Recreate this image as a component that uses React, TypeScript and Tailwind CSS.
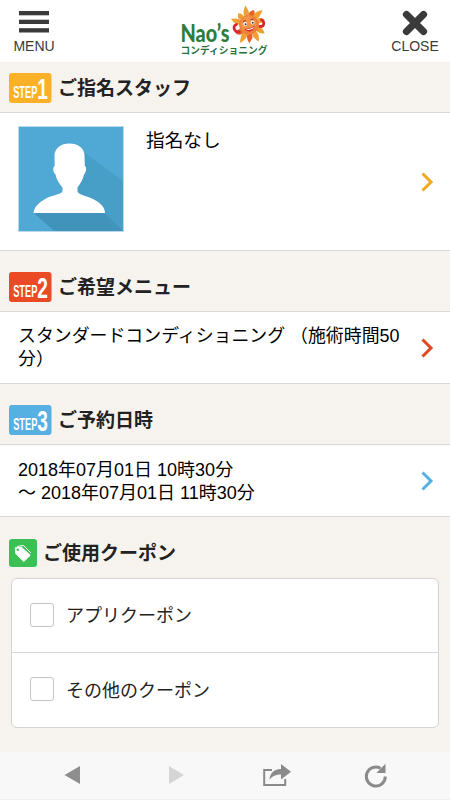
import { ReactNode } from 'react';

const font = "font-['Liberation_Sans','Noto_Sans_CJK_JP',sans-serif]";
const jpFont = "font-['Noto_Sans_CJK_JP',sans-serif]";

// [angle, length, color] for every flame round the sun
const flames: [number, number, string][] = [
  [-13, 19.5, '#efa233'],
  [15, 15.5, '#e4602c'],
  [40, 20, '#efa233'],
  [69, 16.5, '#efa233'],
  [117, 18, '#eda02c'],
  [148, 19.5, '#efa233'],
  [177, 18.5, '#e4602c'],
  [204, 20.5, '#efa233'],
  [232, 16, '#e4602c'],
  [286, 19, '#efa233'],
  [314, 15.5, '#eda02c'],
];

function Logo() {
  return (
    <svg width="90" height="54" viewBox="180 3 90 54" className="overflow-visible">
      {flames.map(([angle, length, color]) => (
        <path
          key={angle}
          d={`M-2 -9 Q-4.8 -12.500 .8 ${-length} Q3.800 -12.500 2 -9Z`}
          fill={color}
          transform={`translate(250 24.700) rotate(${angle})`}
        />
      ))}
      <g fill="none" stroke="#d9252b" strokeWidth="2.800" strokeLinecap="round">
        <path d="M237.500 24.500C234 26 234.500 29.500 237 31.500L240 31.800" />
        <path d="M262.500 20C265.500 21 265.500 25.500 262.500 26.500L260.500 26.300" />
      </g>
      <circle cx="250" cy="24.700" r="10" fill="#ee8039" />
      <circle cx="249.500" cy="24" r="7.800" fill="#f3934a" />
      <circle cx="246.300" cy="24" r="1.900" fill="#fff" />
      <circle cx="253.500" cy="22.500" r="1.900" fill="#fff" />
      <circle cx="246.600" cy="24.200" r="1" fill="#432" />
      <circle cx="253.700" cy="22.700" r="1" fill="#432" />
      <path d="M243.800 21.500l3.200-1M251.500 19.500l3.500-.5" stroke="#a3351c" strokeWidth="1" />
      <path d="M245.500 28.700c4 .5 7-.5 10-3.200 0 4-2.500 6.200-5.500 6-2 0-3.700-1-4.500-2.800z" fill="#cf2b23" />
      <path d="M247 29c3 .3 5.500-.5 7.800-2l-.5 1.500c-2 1.200-4.300 1.600-6.500 1.300z" fill="#fff" />
      <text transform="translate(181.500 42)" fontSize="25" fontWeight="900" fontFamily="Lato, sans-serif" fill="#2f7d3b" textLength="49" lengthAdjust="spacingAndGlyphs">
        Nao’s
      </text>
      <text x="181.500" y="53.700" fontSize="9.800" fontWeight="700" fontFamily="'Noto Sans CJK JP', sans-serif" fill="#26703a" textLength="87" lengthAdjust="spacingAndGlyphs">
        コンディショニング
      </text>
    </svg>
  );
}

function Header() {
  return (
    <header className="flex h-[62px] justify-between bg-white text-[#3a3a3a]">
      <button className="flex w-[68px] flex-col items-center pt-[11px]">
        <svg width="30" height="22" viewBox="0 0 30 22" fill="#3a3a3a">
          <rect y="0" width="30" height="4.300" />
          <rect y="8.700" width="30" height="4.300" />
          <rect y="17.200" width="30" height="4.300" />
        </svg>
        <span className="mt-[5px] text-[14px] leading-4">MENU</span>
      </button>
      <div className="pt-[3px]">
        <Logo />
      </div>
      <button className="flex w-[70px] flex-col items-center pt-[10px]">
        <svg width="26" height="26" viewBox="0 0 26 26">
          <path d="M4.500 4.500L21.500 21.500M21.500 4.500L4.500 21.500" stroke="#3a3a3a" strokeWidth="7.200" strokeLinecap="round" />
        </svg>
        <span className="mt-[2px] text-[14px] leading-4">CLOSE</span>
      </button>
    </header>
  );
}

function StepBadge({ step, color }: { step: string; color: string }) {
  return (
    <svg width="43" height="30" viewBox="0 0 43 30" className="overflow-visible">
      <rect width="42.500" height="30" rx="3" fill={color} />
      <g fill="#fff" fontFamily="'Liberation Sans', sans-serif" fontWeight="700">
        <text transform="translate(4.200 24.700) scale(.56 1)" fontSize="16.500">STEP</text>
        <text transform="translate(28.300 25.500) scale(.66 1)" fontSize="29">{step}</text>
      </g>
    </svg>
  );
}

function SectionTitle({ icon, children }: { icon: ReactNode; children: ReactNode }) {
  return (
    <h2 className={`flex items-center gap-[6px] pl-[9px] text-[19px] leading-[30px] font-bold text-[#222] ${jpFont}`}>
      {icon}
      <span className="relative -top-px">{children}</span>
    </h2>
  );
}

function Chevron({ color }: { color: string }) {
  return (
    <svg className="shrink-0" width="14" height="20" viewBox="0 0 14 20" fill="none">
      <path d="M2.500 1.500L11 10L2.500 18.500" stroke={color} strokeWidth="3" />
    </svg>
  );
}

function Avatar() {
  return (
    <svg className="shrink-0" width="106" height="106" viewBox="0 0 106 106">
      <rect width="106" height="106" fill="#b9d9e8" />
      <rect x="1" y="1" width="104" height="104" fill="#50a9d4" />
      <path d="M67 27L105 55V105H87L50 70z" fill="#479fc8" />
      <path d="M16 87H86L105 105H36z" fill="#4293bc" />
      <path
        d="M51.500 17.500C60 17.500 66 22 66.500 29L66.800 40C68.800 40.500 68.500 46 66 48.500C65 54 61.500 58.500 59.500 61.500V65.500C61 69 68 69.500 74 72.500C82 76.500 87 81 87 87H15.500C16 81 21 76.500 28 72.500C34 69 42 69 44.500 65.500V61.500C41.500 58 38.500 54 37.500 48.500C35 46.500 34.500 41 36.700 40L36.500 29C37 22 43 17.500 51.500 17.500Z"
        fill="#fff"
      />
    </svg>
  );
}

function CouponIcon() {
  return (
    <svg width="28" height="28" viewBox="0 0 28 28">
      <rect width="28" height="28" rx="3" fill="#3cc054" />
      <path d="M8 7.500L14.500 6.500L22 14" fill="none" stroke="#fff" strokeWidth="1" />
      <path d="M6.300 8.800L12.500 8.300L21.200 16.300L14.700 22.500L6.700 14.500Z" fill="#fff" stroke="#fff" strokeWidth="1" strokeLinejoin="round" />
      <circle cx="8.800" cy="10.800" r="1.200" fill="#3cc054" />
    </svg>
  );
}

function Coupon({ label }: { label: string }) {
  return (
    <label className={`flex h-[74px] items-center gap-[12px] pb-[2px] pl-[18px] text-[18px] text-[#222] ${jpFont}`}>
      <input type="checkbox" className="size-6 appearance-none rounded-[3px] border border-[#c4c4c4] bg-white" />
      <span>{label}</span>
    </label>
  );
}

function Toolbar() {
  return (
    <nav className="h-12 border-b border-[#f0f0f0] bg-[#f8f8f8]">
      <svg width="450" height="46" viewBox="0 752 450 46">
        <path d="M64.500 775L80 766V784Z" fill="#8e8e8e" />
        <path d="M184 775L169 766V784Z" fill="#d5d5d5" />
        <path d="M272 770H264.200V785H285.200V779" fill="none" stroke="#8a8a8a" strokeWidth="2" />
        <path d="M269.500 780C270 772.500 274.500 769 281 769V764L291 771.800L281 779.500V774.500C276 774.500 272 776 269.500 780Z" fill="#8a8a8a" />
        <path d="M380.500 768.300A9.500 9.500 0 1 0 385.300 776.500" fill="none" stroke="#8a8a8a" strokeWidth="3" />
        <path d="M385.500 763.800V773H376.300Z" fill="#8a8a8a" />
      </svg>
    </nav>
  );
}

export default function App() {
  return (
    <div className={`flex h-[800px] w-[450px] flex-col overflow-hidden bg-[#f6f3ee] text-black ${font}`}>
      <Header />
      <main className="flex-1 bg-[repeating-linear-gradient(0deg,#f7f4ef_0px,#f7f4ef_2px,#f5f2ec_3px,#f7f4ef_4px)]">
        <section>
          <div className="pt-[11px] pb-[9px]">
            <SectionTitle icon={<StepBadge step="1" color="#fbb127" />}>ご指名スタッフ</SectionTitle>
          </div>
          <div className="flex h-[139px] items-center justify-between border-y border-[#d9d8d5] bg-white pr-[16px] pl-[18px]">
            <div className="flex gap-[22px] pb-[6px]">
              <Avatar />
              <p className={`text-[18.700px] leading-[26px] ${jpFont}`}>指名なし</p>
            </div>
            <Chevron color="#f0aa20" />
          </div>
        </section>
        <section>
          <div className="pt-[21px] pb-[9px]">
            <SectionTitle icon={<StepBadge step="2" color="#ea4b24" />}>ご希望メニュー</SectionTitle>
          </div>
          <div className="flex h-[73px] items-center justify-between border-y border-[#d9d8d5] bg-white pr-[16px] pl-[18px]">
            <p className="w-[390px] pt-px text-[17.900px] leading-[23px]">スタンダードコンディショニング （施術時間50分）</p>
            <Chevron color="#dd4823" />
          </div>
        </section>
        <section>
          <div className="pt-[21px] pb-[9px]">
            <SectionTitle icon={<StepBadge step="3" color="#56b1e2" />}>ご予約日時</SectionTitle>
          </div>
          <div className="flex h-[73px] items-center justify-between border-y border-[#d9d8d5] bg-white pr-[16px] pl-[18px]">
            <p className="pt-[2px] text-[18px] leading-[23px]">
              2018年07月01日 10時30分
              <br />〜 2018年07月01日 11時30分
            </p>
            <Chevron color="#56b1e2" />
          </div>
        </section>
        <section>
          <div className="pt-[21px] pb-[10px]">
            <SectionTitle icon={<CouponIcon />}>ご使用クーポン</SectionTitle>
          </div>
          <div className="mx-[11px] divide-y divide-[#d6d6d6] rounded-md border border-[#d3d3d3] bg-white">
            <Coupon label="アプリクーポン" />
            <Coupon label="その他のクーポン" />
          </div>
        </section>
      </main>
      <Toolbar />
    </div>
  );
}
